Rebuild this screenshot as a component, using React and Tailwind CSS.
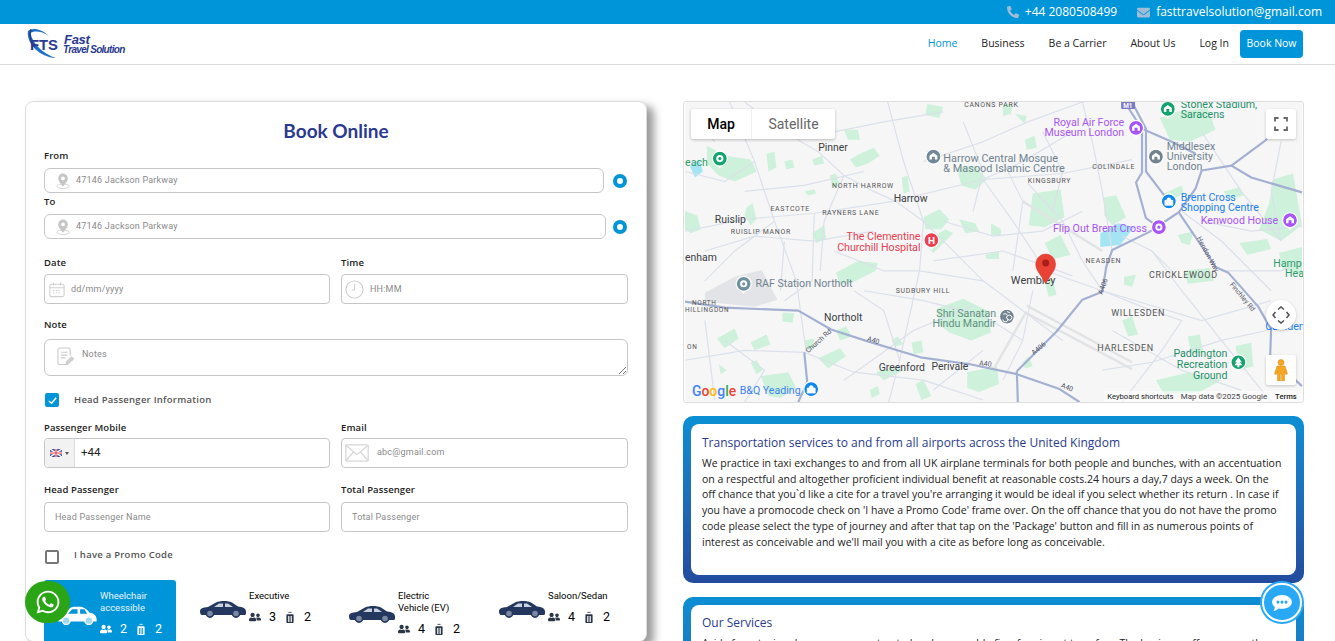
import { FaWhatsapp, FaUserFriends, FaPhoneAlt, FaEnvelope } from "react-icons/fa";

const GREEN = [
  "M22 44 L40 54 L66 58 L72 70 L50 80 L34 74 L22 62Z", "M82 52 L90 50 L92 66 L84 70Z", "M100 60 L108 58 L110 66 L102 68Z",
  "M128 58 L138 54 L140 62 L130 64Z", "M146 74 L152 72 L156 84 L148 86Z", "M166 58 L176 52 L190 46 L196 54 L184 62 L172 66Z", "M160 28 L174 28 L176 38 L164 38Z",
  "M120 90 L130 88 L132 92 L124 94Z", "M0 110 L12 114 L16 128 L6 132 L0 128Z", "M62 106 L68 102 L72 118 L66 124L60 114Z", "M128 132 L140 124 L142 138 L132 142Z",
  "M218 76 L224 74 L226 90 L220 92Z", "M240 116 L256 108 L266 118 L258 128 L242 128Z", "M274 66 L292 64 L304 78 L292 88 L278 84Z", "M244 2 L260 5 L256 16 L242 13Z",
  "M276 118 L292 122 L296 130 L282 132Z", "M308 122 L318 128 L318 134 L308 134Z", "M152 172 L174 160 L194 162 L192 170 L168 182 L156 184Z", "M98 212 L110 213 L108 222 L98 221Z",
  "M32 238 L50 228 L54 238 L40 248Z", "M66 242 L82 234 L86 244 L70 250Z", "M120 240 L130 238 L130 248 L122 250Z", "M152 230 L162 226 L168 236 L156 240Z", "M134 258 L156 248 L162 256 L144 268Z", "M66 262 L72 260 L78 270 L72 274Z",
  "M34 264 L42 270 L36 274Z", "M76 276 L104 272 L112 288 L96 298 L84 296Z", "M228 242 L238 240 L240 252 L230 254Z", "M208 240 L214 236 L220 244 L212 246Z", "M254 208 L280 198 L304 210 L308 232 L288 240 L266 232 L256 224Z",
  "M192 272 L212 266 L220 270 L200 280Z", "M284 272 L314 266 L316 284 L296 292 L284 288Z", "M186 290 L194 286 L196 294 L188 298Z", "M232 284 L240 280 L248 296 L238 300Z",
  "M240 142 L262 128 L270 132 L250 152Z", "M302 154 L316 150 L316 158 L304 158Z", "M320 2 L330 2 L328 12 L320 14Z", "M342 38 L352 34 L354 46 L344 48Z", "M332 12 L344 14 L342 22Z",
  "M350 92 L378 88 L382 116 L362 126 L346 124Z", "M422 96 L434 94 L444 116 L430 124 L422 114Z", "M362 142 L378 134 L388 154 L370 158Z", "M478 16 L494 10 L526 6 L534 28 L508 40 L488 38Z",
  "M482 92 L500 84 L502 92 L488 100Z", "M496 134 L512 130 L508 144 L500 142Z", "M542 90 L558 86 L562 94 L548 98Z", "M592 78 L612 72 L621 124 L600 140 L578 128 L588 102Z", "M558 142 L586 138 L590 148 L566 154Z", "M502 170 L528 167 L532 180 L506 183Z",
  "M442 176 L454 174 L450 186 L442 184Z", "M440 220 L450 216 L456 234 L446 236Z", "M506 236 L518 234 L522 252 L510 254Z", "M474 280 L508 272 L540 280 L518 292 L482 294Z", "M362 180 L370 178 L374 194 L366 196Z", "M598 152 L621 146 L621 174 L602 168Z", "M340 262 L346 256 L350 266 L342 268Z", "M554 246 L570 242 L572 266 L558 270Z",
];

const ROADS = [
  "M0 130 L60 118 L130 112 L210 100 L300 78 L380 72 L450 58", "M45 0 L70 60 L90 120 L112 180 L122 252", "M134 50 L160 74 L190 90 L212 100 L240 120 L300 180 L380 240",
  "M204 0 L220 60 L240 120 L236 170 L216 260 L205 302", "M130 112 L128 180 L100 200", "M90 120 L50 150 L20 180", "M160 74 L140 120 L136 170",
  "M300 78 L330 120 L363 170 L420 190 L520 220 L590 200", "M240 60 L300 40 L345 20 L400 0", "M345 82 L380 120 L400 160 L420 190", "M520 30 L560 90 L600 140", "M470 150 L500 190 L540 240 L590 302",
  "M420 190 L470 210 L500 220 L480 250 L440 302", "M320 60 L340 100 L330 170", "M250 160 L320 150 L390 175", "M0 260 L60 250 L120 252 L170 272 L240 280 L300 300", "M150 150 L200 170 L236 170 L300 180",
  "M590 229 L540 240 L470 262 L420 270", "M400 0 L410 40 L420 90 L430 150", "M500 110 L540 140 L590 190", "M60 0 L100 30 L134 50", "M0 70 L40 80 L70 60", "M20 220 L30 300", "M170 190 L200 210 L216 260",
  "M110 20 L150 30 L200 20 L260 10", "M60 90 L120 84 L180 70", "M20 150 L70 135 L130 140 L190 130", "M260 120 L310 135 L360 130 L400 110", "M280 20 L300 70 L290 110", "M360 30 L380 70 L370 110",
  "M180 190 L240 200 L300 215 L340 240", "M40 240 L80 270 L60 302", "M160 280 L230 230 L290 205", "M390 30 L340 60 L300 78", "M520 120 L570 130 L621 125", "M430 230 L500 270 L560 290", "M540 170 L600 170 L621 160",
  "M600 40 L590 90 L600 140", "M490 170 L470 150 L440 135", "M350 190 L340 240 L320 280", "M250 290 L300 250", "M100 140 L96 190", "M10 20 L30 40",
];

const HIGHWAYS = [
  "M0 201 L40 207 L114 210 L147 229 L184 241 L237 257 L287 264 L334 274 L377 289 L397 302", "M334 271 L374 231 L400 199 L420 191 L424 166 L430 149 L467 131 L497 111 L514 87 L520 69 L550 64 L584 39 L610 10",
  "M445 4 L460 27 L460 71 L454 81 L464 117 L477 126", "M452 4 L464 27 L464 70 L477 87 L487 100", "M550 64 L570 76 L621 91", "M497 111 L524 151 L534 166 L547 172 L577 206 L590 229 L589 256 L621 286", "M120 252 L123 282 L114 302", "M334 271 L335 302", "M460 27 L490 40 L514 52",
];

const POI = 10.7;
const LABELS = [
  ["Pinner", 134, 49, 10.5, "#3c4043"], ["Harrow", 210, 101, 10.5, "#3c4043"], ["Ruislip", 30, 122, 10.5, "#3c4043"], ["enham", 0, 160, 10.5, "#3c4043"], ["each", 0, 64, POI, "#2d9d6e"],
  ["NORTH HARROW", 148, 87, 7, "#555", "0.7px"], ["EASTCOTE", 86, 110, 7, "#555", "0.7px"], ["RAYNERS LANE", 138, 114, 7, "#555", "0.7px"], ["RUISLIP MANOR", 46, 133, 7, "#555", "0.7px"],
  ["CANONS PARK", 281, 5, 7, "#555", "0.7px"], ["Harrow Central Mosque", 260, 60, 11, "#71838f"], ["& Masood Islamic Centre", 260, 70, 11, "#71838f"], ["The Clementine", 237, 139, POI, "#e8404f", null, "end"], ["Churchill Hospital", 237, 150, POI, "#e8404f", null, "end"],
  ["RAF Station Northolt", 71, 186, POI, "#71838f"], ["NORTH", 7, 204, 6.5, "#555", "0.7px"], ["HILLINGDON", 0, 211, 6.5, "#555", "0.7px"], ["Northolt", 140, 220, 10.5, "#3c4043"], ["ON", 2, 249, 6.5, "#555", "0.7px"],
  ["SUDBURY HILL", 212, 192, 7, "#555", "0.7px"], ["Shri Sanatan", 253, 216, POI, "#5f9080"], ["Hindu Mandir", 249, 226, POI, "#5f9080"], ["Greenford", 195, 271, 10.5, "#3c4043"], ["Perivale", 248, 270, 10.5, "#3c4043"],
  ["B&Q Yeading", 55, 294, POI, "#3b82f6"], ["Stonex Stadium,", 499, 6, POI, "#1f9069"], ["Saracens", 499, 16, POI, "#1f9069"], ["Royal Air Force", 442, 24, POI, "#a855f7", null, "end"], ["Museum London", 442, 34, POI, "#a855f7", null, "end"],
  ["Middlesex", 485, 48, POI, "#71838f"], ["University", 485, 58, POI, "#71838f"], ["London", 485, 68, POI, "#71838f"], ["COLINDALE", 410, 67, 7, "#555", "0.7px"], ["KINGSBURY", 345, 82, 7, "#555", "0.7px"],
  ["Brent Cross", 499, 100, POI, "#1a80f0"], ["Shopping Centre", 499, 110, POI, "#1a80f0"], ["Kenwood House", 597, 123, POI, "#a855f7", null, "end"], ["Flip Out Brent Cross", 465, 131, POI, "#a855f7", null, "end"],
  ["Wembley", 328, 183, 11, "#3c4043"], ["NEASDEN", 403, 162, 7, "#555", "0.7px"], ["CRICKLEWOOD", 467, 177, 9, "#555", "0.7px"], ["WILLESDEN", 429, 215, 9, "#555", "0.7px"], ["HARLESDEN", 415, 251, 9, "#555", "0.7px"],
  ["Paddington", 546, 257, POI, "#1f9069", null, "end"], ["Recreation", 546, 268, POI, "#1f9069", null, "end"], ["Ground", 546, 279, POI, "#1f9069", null, "end"], ["Hamp", 592, 166, POI, "#2d9d6e"], ["Hea", 604, 176, POI, "#2d9d6e"], ["Camden", 584, 230, POI, "#1a80f0"],
];

const PINS = [
  [35, 57, "#13a36f", "ring"], [250, 55, "#71879a", "house"], [248, 139, "#ee3f51", "H"], [59, 183, "#71919f", "ring"], [324, 216, "#71838f", "om"], [127, 289, "#0f88ef", "bag"],
  [486, 7, "#13a36f", "house"], [454, 26, "#a855f7", "house"], [474, 55, "#71838f", "house"], [487, 100, "#0f88ef", "bag"], [477, 126, "#a855f7", "ring"], [609, 119, "#a855f7", "house"], [557, 262, "#13a36f", "tree"],
];

function MapPin({ x, y, fill, glyph }) {
  return (
    <g transform={`translate(${x} ${y})`}>
      <path d="M-4 5 L0 10 L4 5Z" fill="#fff" />
      <circle r="7.5" fill={fill} stroke="#fff" strokeWidth="1.2" />
      {glyph === "ring" && <circle r="2.6" fill={fill} stroke="#fff" strokeWidth="2" />}
      {glyph === "house" && <path d="M-4 3 V-1 L0 -4 L4 -1 V3 H1.5 V0 H-1.5 V3Z" fill="#fff" />}
      {glyph === "bag" && <path d="M-4 -1 H4 V4 H-4Z M-2 -1 A2 2.5 0 0 1 2 -1" fill="#fff" stroke="#fff" strokeWidth="0.7" />}
      {glyph === "tree" && <path d="M0 -5 L3.5 0 H1.5 L4 3 H1 V5 H-1 V3 H-4 L-1.5 0 H-3.5Z" fill="#fff" />}
      {glyph === "om" && <path d="M-4 -2 A2.5 2 0 1 1 -1 1 A2.5 2.2 0 1 1 -4 3 M1 -1 A2.5 2.5 0 1 1 1 3 M0 -5 L3 -4" fill="none" stroke="#fff" strokeWidth="1" />}
      {glyph === "H" && <text textAnchor="middle" y="3.5" fontSize="10" fontWeight="700" fill="#fff">H</text>}
    </g>
  );
}

function MapArt() {
  return (
    <svg viewBox="0 0 621 302" className="block w-full h-full font-['Roboto',sans-serif]">
      <rect width="621" height="302" fill="#f6f6f7" />
      <path d="M20 192 L50 176 L77 169 L93 199 L70 206 L20 201Z" fill="#e2e4e7" />
      {GREEN.map((d, i) => <path key={i} d={d} fill="#cdf1da" />)}
      <path d="M418 132 L436 122 L452 126 L438 144 L418 146Z" fill="#a5e4f3" />
      <path d="M5 65 L14 58 L18 70 L10 76Z" fill="#a5e4f3" />
      <path d="M310 270 L343 212 L450 269 M344 205 L450 262 M340 100 L420 150" stroke="#e2e3e5" strokeWidth="2.5" fill="none" />
      {ROADS.map((d, i) => <path key={i} d={d} fill="none" stroke="#dbe0ea" strokeWidth="1.2" />)}
      {HIGHWAYS.map((d, i) => <path key={i} d={d} fill="none" stroke="#a3b0d1" strokeWidth="2.2" strokeLinejoin="round" />)}
      <rect x="439" y="-2" width="14" height="9" rx="1" fill="#7b78c7" />
      <text x="441" y="6" fontSize="6.5" fontWeight="700" fill="#fff">M1</text>
      {LABELS.map(([t, x, y, s, c, sp, a]) => (
        <text key={t} x={x} y={y} fontSize={s} fill={c} textAnchor={a || "start"} letterSpacing={sp || 0}>{t}</text>
      ))}
      <text transform="translate(124 253) rotate(-42)" fontSize="7" fill="#556">Church Rd</text>
      <text transform="translate(183 240) rotate(18)" fontSize="7" fill="#556">A40</text>
      <text transform="translate(296 265) rotate(6)" fontSize="7" fill="#556">A40</text>
      <text transform="translate(378 287) rotate(22)" fontSize="7" fill="#556">A40</text>
      <text transform="translate(351 255) rotate(-40)" fontSize="7" fill="#556">A406</text>
      <text transform="translate(420 194) rotate(-70)" fontSize="7" fill="#556">A406</text>
      <text transform="translate(548 184) rotate(50)" fontSize="7" fill="#556">Finchley Rd</text>
      <text transform="translate(515 137) rotate(62)" fontSize="7" fill="#556">Hendon Way</text>
      {PINS.map(([x, y, f, g]) => <MapPin key={`${x}-${y}`} x={x} y={y} fill={f} glyph={g} />)}
      <path d="M363 183 C358 173 353 170 353 163 A10 10 0 0 1 373 163 C373 170 368 173 363 183Z" fill="#ea4335" stroke="#d33a2c" strokeWidth="0.5" />
      <circle cx="363" cy="162" r="3.5" fill="#a5201a" />
      <text x="7" y="296" fontSize="14" fontWeight="500">
        <tspan fill="#4285f4">G</tspan><tspan fill="#ea4335">o</tspan><tspan fill="#fbbc05">o</tspan><tspan fill="#4285f4">g</tspan><tspan fill="#34a853">l</tspan><tspan fill="#ea4335">e</tspan>
      </text>
      <rect x="422" y="291" width="199" height="11" fill="#fff" fillOpacity="0.55" />
      <text x="425" y="299" fontSize="7.7" fill="#222">Keyboard shortcuts</text>
      <text x="499" y="299" fontSize="8" fill="#444">Map data ©2025 Google</text>
      <text x="594" y="299" fontSize="7.7" fontWeight="500" fill="#222">Terms</text>
    </svg>
  );
}

function PinIcon() {
  return (
    <svg viewBox="0 0 16 18" className="w-[14px] h-[16px] shrink-0" fill="#c6c6c6">
      <ellipse cx="8" cy="15" rx="7" ry="2.6" fill="none" stroke="#cfcfcf" />
      <path fillRule="evenodd" d="M8 0.5 A5.5 5.5 0 0 1 13.5 6 C13.5 9.5 10 12 8 15.5 C6 12 2.5 9.5 2.5 6 A5.5 5.5 0 0 1 8 0.5Z M8 3.8 A2.2 2.2 0 1 0 8 8.2 A2.2 2.2 0 1 0 8 3.8Z" />
    </svg>
  );
}

function CalendarIcon() {
  return (
    <svg viewBox="0 0 18 18" className="w-4 h-[17px] shrink-0" fill="none" stroke="#cfcfcf" strokeWidth="1.2">
      <rect x="1" y="3" width="16" height="14" rx="2" />
      <path d="M1 7 H17 M5 1 V4.5 M13 1 V4.5" />
      <path d="M4.5 10 H13.5 M4.5 13 H13.5" strokeDasharray="1.5 1.5" />
    </svg>
  );
}

function ClockIcon() {
  return (
    <svg viewBox="0 0 20 20" className="w-[19px] h-[19px] shrink-0" fill="none" stroke="#cfcfcf" strokeWidth="1.2">
      <circle cx="10" cy="10" r="9" />
      <path d="M10 4.5 V10.5 H7" />
    </svg>
  );
}

function NoteIcon() {
  return (
    <svg viewBox="0 0 18 20" className="w-[17px] h-[19px] shrink-0" fill="none" stroke="#cccccc" strokeWidth="1.2">
      <path d="M12 18.5 H3 A2 2 0 0 1 1 16.5 V3 A2 2 0 0 1 3 1 H12 A2 2 0 0 1 14 3 V9" />
      <path d="M4 5.5 H11 M4 8.5 H11 M4 11.5 H9" />
      <path d="M9.5 18 L10.5 15 L15.5 10.5 L17.5 12.5 L12.5 17Z" fill="#d4d4d4" />
    </svg>
  );
}

function MailIcon() {
  return (
    <svg viewBox="0 0 24 18" className="w-6 h-[18px] shrink-0" fill="none" stroke="#d6d6d6" strokeWidth="1.2">
      <rect x="0.8" y="0.8" width="22.4" height="16.4" rx="1" />
      <path d="M1 1.5 L12 10.5 L23 1.5 M1 16.5 L8.5 8 M23 16.5 L15.5 8" />
    </svg>
  );
}

function Flag() {
  return (
    <svg viewBox="0 0 12 8" className="w-3 h-2">
      <rect width="12" height="8" fill="#3b4b8f" />
      <path d="M0 0 L12 8 M12 0 L0 8" stroke="#fff" strokeWidth="1.4" />
      <path d="M6 0 V8 M0 4 H12" stroke="#fff" strokeWidth="2.4" />
      <path d="M6 0 V8 M0 4 H12" stroke="#e0454f" strokeWidth="1.2" />
    </svg>
  );
}

function Luggage({ className }) {
  return (
    <svg viewBox="0 0 10 14" className={className} fill="currentColor">
      <path d="M3 0 H7 V1 H3Z" />
      <path fillRule="evenodd" d="M1.5 3 H8.5 A1 1 0 0 1 9.5 4 V13 A1 1 0 0 1 8.5 14 H1.5 A1 1 0 0 1 0.5 13 V4 A1 1 0 0 1 1.5 3Z M2.5 5 V12.5 H3.5 V5Z M4.5 5 V12.5 H5.5 V5Z M6.5 5 V12.5 H7.5 V5Z" />
    </svg>
  );
}

function Sedan() {
  return (
    <svg viewBox="0 0 46 18" className="w-[46px] h-[18px] shrink-0">
      <path d="M0 11 C0 8.5 3 7.5 8 7 L16 2.5 C20 0.5 28 0.5 32 2.5 L38 6.5 C43 7 46 8.5 46 11.5 L46 13.5 C46 14.5 45 15 44 15 H2 C1 15 0 14 0 11Z" fill="#24375e" />
      <path d="M14 7 L19 3.5 H23 V7Z M25 3.5 H28 L33 7 H25Z" fill="#c9d0de" />
      <circle cx="10" cy="13.5" r="3.6" fill="#7a88a3" stroke="#24375e" strokeWidth="1.6" />
      <circle cx="36" cy="13.5" r="3.6" fill="#7a88a3" stroke="#24375e" strokeWidth="1.6" />
    </svg>
  );
}

function Van() {
  return (
    <svg viewBox="0 0 46 23" className="w-[41px] h-[20px] shrink-0">
      <path d="M1 17 C1 13 3 11 8 10 L14 4 C16 2 18 2 24 2 C30 2 33 4 37 9 C42 10 45 12 45 17 L45 19 H1Z" fill="#fff" />
      <path d="M12 10 L17 5 H23 V10Z M26 5 H31 L34 10 H26Z" fill="#0095d9" />
      <circle cx="10" cy="18" r="4.4" fill="#9fd9f2" stroke="#fff" strokeWidth="1.6" />
      <circle cx="36" cy="18" r="4.4" fill="#9fd9f2" stroke="#fff" strokeWidth="1.6" />
    </svg>
  );
}

function Vehicle({ name, pax, bags, active, top, ml }) {
  return (
    <div className={active ? "h-[61px] rounded-t-[3px] bg-[#0095d9] text-white" : "h-[61px] text-black"}>
      <div className={`flex items-start pt-[10px] ${ml}`}>
        <div className={top}>{active ? <Van /> : <Sedan />}</div>
        <div className={active ? "ml-[2px]" : "ml-[3px]"}>
          <p className={active ? "w-[60px] text-[9.5px] leading-3 text-[#e6f6fd] font-['Roboto',sans-serif]" : "w-[62px] text-[9.5px] leading-3 font-['Roboto',sans-serif]"}>{name}</p>
          <div className="mt-[7px] flex items-center text-[12.5px] leading-4 font-['Roboto',sans-serif]">
            <FaUserFriends className={active ? "w-3 h-3 text-white" : "w-3 h-3 text-[#2b3648]"} />
            <span className="ml-2 w-2">{pax}</span>
            <Luggage className={active ? "ml-[9px] w-2 h-[13px] text-white" : "ml-[9px] w-2 h-[13px] text-[#2b3648]"} />
            <span className="ml-[10px]">{bags}</span>
          </div>
        </div>
      </div>
    </div>
  );
}

const labelCls = "block h-3 translate-y-[1px] text-[9.5px] leading-3 font-semibold text-[#222] tracking-[0.1px] font-['Open_Sans',sans-serif]";
const inputCls = "min-w-0 flex-1 bg-transparent outline-none text-[9px] text-[#666] tracking-[0.2px] placeholder:text-[#8a8a8a] font-['Roboto',sans-serif]";
const boxCls = "flex items-center border border-[#c6c6c6] bg-white rounded-[4px]";

function Radio() {
  return <span className="block w-[14px] h-[14px] rounded-full border-[4px] border-[#0095d9] bg-white" />;
}

export default function App() {
  return (
    <div className="h-screen overflow-hidden bg-white font-['Open_Sans',sans-serif]">
      {/* top bar */}
      <div className="h-6 bg-[#0095d9] flex items-center justify-end pr-[13px] text-[12px] text-white">
        <FaPhoneAlt className="w-3 h-3 text-[#9fbdd6]" />
        <span className="ml-[6px]">+44 2080508499</span>
        <FaEnvelope className="ml-5 w-[13px] h-[13px] text-[#9fbdd6]" />
        <span className="ml-[6px]">fasttravelsolution@gmail.com</span>
      </div>

      {/* nav */}
      <nav className="h-[41px] border-b border-[#dddddd] flex items-center justify-between pl-[26px] pr-[32px]">
        <div className="flex items-center">
          <svg viewBox="0 0 33 32" className="w-[33px] h-[32px]">
            <path d="M2 3 C0 14 12 29 30 30 C17 26 6 15 4.5 5 C8 2.5 16 3 23 8 C16 1 6 -1 2 3Z" fill="#1f6fc4" />
            <path d="M5 1.5 C2.5 8 5 14 9 19" fill="none" stroke="#273a8f" strokeWidth="1.6" />
            <text x="4" y="22" fontSize="15" fontWeight="700" fill="#2a3a8e" className="font-['Liberation_Sans',sans-serif]" textLength="28" lengthAdjust="spacingAndGlyphs">FTS</text>
          </svg>
          <div className="ml-[4px] mt-[1px] text-[#2a3a8e] italic font-bold font-['Liberation_Sans',sans-serif]">
            <div className="text-[13px] leading-[10px] tracking-[-0.3px] pl-[1px]">Fast</div>
            <div className="text-[10px] leading-[9px] tracking-[-0.7px]">Travel Solution</div>
          </div>
        </div>
        <div className="flex items-center text-[10.5px] text-[#222]">
          <a className="text-[#0095d9]">Home</a>
          <a className="ml-6">Business</a>
          <a className="ml-6">Be a Carrier</a>
          <a className="ml-6">About Us</a>
          <a className="ml-6">Log In</a>
          <a className="ml-[11px] h-7 w-[63px] rounded-[4px] bg-[#0095d9] text-white flex items-center justify-center">Book Now</a>
        </div>
      </nav>

      <main className="flex items-start gap-9 pl-[25px] pr-[31px] pt-9">
        {/* booking form */}
        <section className="w-[622px] shrink-0 border border-[#dddddd] rounded-lg bg-white px-[18px] pt-[16px] shadow-[7px_5px_9px_rgba(0,0,0,0.4)]">
          <h1 className="h-[26px] text-center text-[19px] leading-[26px] font-bold text-[#2a3a8e] font-['Lato',sans-serif]">Book Online</h1>
          <label className={`${labelCls} mt-[5px]`}>From</label>
          <div className="mt-[7px] flex items-center">
            <div className={`${boxCls} w-[560px] h-[25px] rounded-[6px] pl-[11px]`}>
              <PinIcon /><input className={`${inputCls} ml-[6px]`} placeholder="47146 Jackson Parkway" />
            </div>
            <span className="ml-[9px]"><Radio /></span>
          </div>
          <label className={`${labelCls} mt-[2px]`}>To</label>
          <div className="mt-[7px] flex items-center">
            <div className={`${boxCls} w-[562px] h-[25px] rounded-[6px] pl-[11px]`}>
              <PinIcon /><input className={`${inputCls} ml-[6px]`} placeholder="47146 Jackson Parkway" />
            </div>
            <span className="ml-[7px]"><Radio /></span>
          </div>

          <div className="mt-[17px] grid grid-cols-[286px_287px] gap-x-[11px]">
            <div>
              <label className={labelCls}>Date</label>
              <div className={`${boxCls} mt-[6px] h-[30px] pl-[4px]`}>
                <CalendarIcon /><input className={`${inputCls} ml-[6px] pt-[1px]`} placeholder="dd/mm/yyyy" />
              </div>
            </div>
            <div>
              <label className={labelCls}>Time</label>
              <div className={`${boxCls} mt-[6px] h-[30px] pl-[3px]`}>
                <ClockIcon /><input className={`${inputCls} ml-[6px] pt-[1px]`} placeholder="HH:MM" />
              </div>
            </div>
          </div>

          <label className={`${labelCls} mt-[14px]`}>Note</label>
          <div className={`${boxCls} relative mt-[9px] h-[37px] rounded-[6px] pl-[12px] items-start pt-[7px]`}>
            <NoteIcon />
            <textarea className={`${inputCls} ml-[8px] mt-[1px] h-5 resize-none`} placeholder="Notes" />
            <svg viewBox="0 0 8 8" className="absolute right-[1px] bottom-[1px] w-2 h-2" stroke="#555" strokeWidth="0.8"><path d="M1 8 L8 1 M5 8 L8 5" /></svg>
          </div>

          <div className="mt-[17px] h-[14px] flex items-center pl-[1px]">
            <span className="w-[14px] h-[14px] rounded-[2px] bg-[#0095d9] flex items-center justify-center">
              <svg viewBox="0 0 12 12" className="w-[11px] h-[11px]" fill="none" stroke="#fff" strokeWidth="1.6"><path d="M2 6.5 L5 9 L10 3" /></svg>
            </span>
            <span className="ml-[15px] text-[9.5px] font-semibold text-[#555] tracking-[0.25px]">Head Passenger Information</span>
          </div>

          <div className="mt-[14px] grid grid-cols-[286px_287px] gap-x-[11px]">
            <div>
              <label className={labelCls}>Passenger Mobile</label>
              <div className={`${boxCls} mt-[5px] h-[30px] overflow-hidden`}>
                <div className="h-full w-[30px] shrink-0 bg-[#f2f2f2] border-r border-[#dcdcdc] flex items-center justify-center">
                  <Flag />
                  <span className="ml-[3px] border-x-[2px] border-t-[3px] border-x-transparent border-t-[#555]" />
                </div>
                <input className="min-w-0 flex-1 pl-[6px] outline-none text-[11.5px] text-[#222] font-['Roboto',sans-serif]" defaultValue="+44" />
              </div>
            </div>
            <div>
              <label className={labelCls}>Email</label>
              <div className={`${boxCls} mt-[5px] h-[30px] pl-[3px]`}>
                <MailIcon /><input className={`${inputCls} ml-[8px]`} placeholder="abc@gmail.com" />
              </div>
            </div>
          </div>

          <div className="mt-[15px] grid grid-cols-[286px_287px] gap-x-[11px]">
            <div>
              <label className={labelCls}>Head Passenger</label>
              <div className={`${boxCls} mt-[7px] h-[30px] pl-[10px]`}>
                <input className={`${inputCls} pt-[1px]`} placeholder="Head Passenger Name" />
              </div>
            </div>
            <div>
              <label className={labelCls}>Total Passenger</label>
              <div className={`${boxCls} mt-[7px] h-[30px] pl-[10px]`}>
                <input className={`${inputCls} pt-[1px]`} placeholder="Total Passenger" />
              </div>
            </div>
          </div>

          <div className="mt-[18px] h-[14px] flex items-center pl-[1px]">
            <span className="w-[14px] h-[14px] rounded-[2px] border-2 border-[#777] bg-white" />
            <span className="ml-[15px] -mt-[3px] text-[9.5px] font-semibold text-[#555] tracking-[0.25px]">I have a Promo Code</span>
          </div>

          <div className="mt-[16px] grid grid-cols-[132px_132px_132px_132px] gap-x-[18px]">
            <Vehicle active name="Wheelchair accessible" pax="2" bags="2" ml="pl-[13px]" top="pt-[15px]" />
            <Vehicle name="Executive" pax="3" bags="2" ml="pl-[6px]" top="pt-[10px]" />
            <Vehicle name="Electric Vehicle (EV)" pax="4" bags="2" ml="pl-[5px]" top="pt-[15px]" />
            <Vehicle name="Saloon/Sedan" pax="4" bags="2" ml="pl-[5px]" top="pt-[10px]" />
          </div>
        </section>

        {/* right column */}
        <section className="w-[621px] shrink-0">
          <div className="relative h-[302px] rounded-[3px] border border-[#dddddd] overflow-hidden">
            <MapArt />
            <div className="absolute left-[7px] top-[7px] h-[30px] flex bg-white rounded-[2px] shadow-[0_1px_3px_rgba(0,0,0,0.25)] text-[14px] font-['Roboto',sans-serif]">
              <span className="w-[61px] flex items-center justify-center font-medium text-black border-r border-[#eeeeee]">Map</span>
              <span className="w-[83px] flex items-center justify-center text-[#666]">Satellite</span>
            </div>
            <div className="absolute right-[7px] top-[7px] w-[30px] h-[30px] bg-white rounded-[2px] flex items-center justify-center shadow-[0_1px_3px_rgba(0,0,0,0.2)]">
              <svg viewBox="0 0 14 14" className="w-[14px] h-[14px]" fill="none" stroke="#666" strokeWidth="1.8"><path d="M1 4.5 V1 H4.5 M9.5 1 H13 V4.5 M13 9.5 V13 H9.5 M4.5 13 H1 V9.5" /></svg>
            </div>
            <div className="absolute right-[7px] top-[198px] w-[30px] h-[30px] rounded-full bg-white flex items-center justify-center shadow-[0_1px_3px_rgba(0,0,0,0.2)]">
              <svg viewBox="0 0 18 18" className="w-[18px] h-[18px]" fill="none" stroke="#555" strokeWidth="1.6"><path d="M6 3.5 L9 1 L12 3.5 M14.5 6 L17 9 L14.5 12 M12 14.5 L9 17 L6 14.5 M3.5 12 L1 9 L3.5 6" /></svg>
            </div>
            <div className="absolute right-[7px] top-[253px] w-[30px] h-[30px] bg-white rounded-[2px] flex items-center justify-center shadow-[0_1px_3px_rgba(0,0,0,0.2)]">
              <svg viewBox="0 0 14 22" className="w-[14px] h-[22px]" fill="#f5a623" stroke="#d98e14" strokeWidth="0.5">
                <circle cx="7" cy="3.5" r="3" />
                <path d="M3 7 H11 L13.5 15 L11.5 15.5 L10.5 12 L10.5 22 H7.6 V15 H6.4 V22 H3.5 V12 L2.5 15.5 L0.5 15Z" />
              </svg>
            </div>
          </div>

          <div className="mt-[13px] h-[167px] rounded-[10px] p-2 bg-gradient-to-b from-[#0a8fd4] to-[#234b9e]">
            <div className="h-full rounded-lg bg-white pl-[11px] pr-[13px] pt-[11px]">
              <h2 className="text-[12px] leading-4 text-[#2a3a8e]">Transportation services to and from all airports across the United Kingdom</h2>
              <p className="mt-[5px] text-[10.5px] leading-[15.7px] text-[#222]">
                We practice in taxi exchanges to and from all UK airplane terminals for both people and bunches, with an accentuation on a respectful and altogether proficient individual benefit at reasonable costs.24 hours a day,7 days a week. On the off chance that you`d like a cite for a travel you're arranging it would be ideal if you select whether its return . In case if you have a promocode check on 'I have a Promo Code' frame over. On the off chance that you do not have the promo code please select the type of journey and after that tap on the 'Package' button and fill in as numerous points of interest as conceivable and we'll mail you with a cite as before long as conceivable.
              </p>
            </div>
          </div>

          <div className="mt-[14px] h-[167px] rounded-[10px] p-2 bg-gradient-to-b from-[#0a8fd4] to-[#234b9e]">
            <div className="h-full rounded-lg bg-white pl-[11px] pr-[13px] pt-[10px]">
              <h2 className="text-[12px] leading-4 text-[#2a3a8e]">Our Services</h2>
              <p className="mt-[5px] text-[10.5px] leading-[15.7px] text-[#222]">
                Aside from taxi exchanges we are a trusted and reasonable firm for airport transfers. The business offers across the UK
              </p>
            </div>
          </div>
        </section>
      </main>

      {/* floating buttons */}
      <a className="fixed left-[25px] top-[581px] w-[45px] h-[42px] rounded-full bg-[#2aa515] flex items-center justify-center">
        <FaWhatsapp className="w-[26px] h-[26px] text-white" />
      </a>
      <a className="fixed left-[1260px] top-[581px] w-[44px] h-[43px] rounded-full bg-[#29a9f5] p-[2px] flex items-center justify-center">
        <span className="w-full h-full rounded-full border-2 border-white flex items-center justify-center">
          <svg viewBox="0 0 24 20" className="w-[22px] h-[18px]">
            <path d="M12 1 C18 1 23 4.5 23 9 C23 13.5 18 16.5 12 16.5 C10.5 16.5 9.5 16.4 8 16 C6.5 17.5 4.5 18.5 2.5 19 C3.5 17.5 4 16 4 14.5 C2 13 1 11 1 9 C1 4.5 6 1 12 1Z" fill="#fff" />
            <circle cx="7.5" cy="9" r="1.7" fill="#29a9f5" /><circle cx="12" cy="9" r="1.7" fill="#29a9f5" /><circle cx="16.5" cy="9" r="1.7" fill="#29a9f5" />
          </svg>
        </span>
      </a>
    </div>
  );
}
